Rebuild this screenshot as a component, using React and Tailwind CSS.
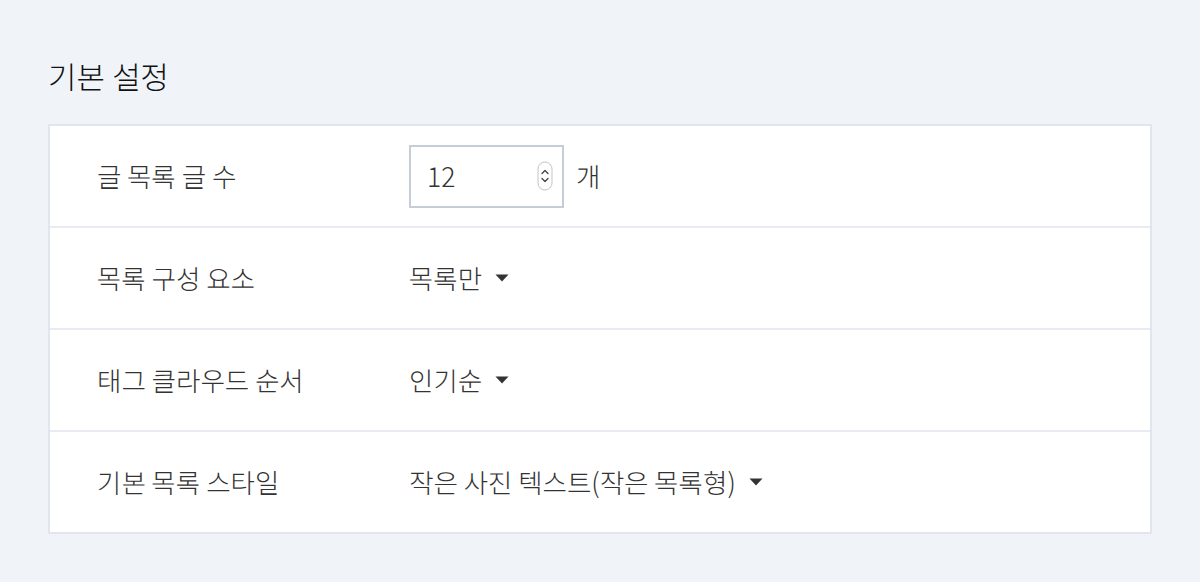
import React from "react";

const font = { fontFamily: '"Noto Sans KR", "Noto Sans CJK KR", "Noto Sans", sans-serif' };

function Caret() {
  return (
    <svg width="14" height="8" viewBox="0 0 14 8" className="ml-[13px] shrink-0">
      <path d="M0.5 0.5h13L7 7.5z" fill="#333" />
    </svg>
  );
}

function Spinner() {
  return (
    <svg width="16" height="30" viewBox="0 0 16 30" className="shrink-0">
      <rect x="1" y="1" width="14" height="28" rx="7" fill="#fff" stroke="#c4c4c4" strokeWidth="1" />
      <path d="M5 12.5l3-3 3 3" fill="none" stroke="#444" strokeWidth="1.3" strokeLinecap="round" strokeLinejoin="round" />
      <path d="M5 17.5l3 3 3-3" fill="none" stroke="#444" strokeWidth="1.3" strokeLinecap="round" strokeLinejoin="round" />
    </svg>
  );
}

function Row({ label, children, last }) {
  return (
    <div className={`grid grid-cols-[359px_1fr] items-center ${last ? "h-[100px]" : "h-[102px] border-b-2 border-[#e8ecf2]"}`}>
      <div className="pl-[47px] text-[26.5px] font-light text-[#333]">{label}</div>
      <div className="flex items-center text-[26.5px] font-light text-[#333]">{children}</div>
    </div>
  );
}

function Select({ value }) {
  return (
    <div className="flex items-center">
      <span>{value}</span>
      <Caret />
    </div>
  );
}

export default function App() {
  return (
    <div className="min-h-screen bg-[#f0f4f8] px-12 pt-[52px]" style={font}>
      <h1 className="text-[31px] leading-[48px] font-light text-[#111] mb-6">기본 설정</h1>
      <div className="bg-white border-2 border-[#e1e5ed] w-[1104px]">
        <Row label="글 목록 글 수">
          <div className="flex items-center justify-between w-[155px] h-[63px] border-2 border-[#c5cdd8] pl-4 pr-[9px]">
            <span>12</span>
            <Spinner />
          </div>
          <span className="ml-3">개</span>
        </Row>
        <Row label="목록 구성 요소">
          <Select value="목록만" />
        </Row>
        <Row label="태그 클라우드 순서">
          <Select value="인기순" />
        </Row>
        <Row label="기본 목록 스타일" last>
          <Select value="작은 사진 텍스트(작은 목록형)" />
        </Row>
      </div>
    </div>
  );
}
